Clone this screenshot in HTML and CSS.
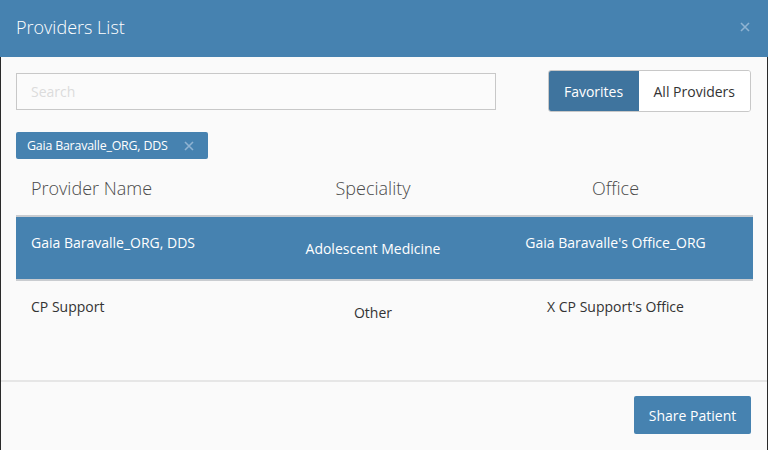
FILE: index.html
```html
<!DOCTYPE html>
<html>
<head>
<meta charset="utf-8">
<link rel="stylesheet" href="styles.css">
</head>
<body>
<div class="modal">
  <div class="modal-header">
    <h1 class="title">Providers List</h1>
    <svg class="close" width="10" height="10" viewBox="0 0 10 10"><path d="M1 1L9 9M9 1L1 9" stroke="#8fb3d2" stroke-width="1.6" fill="none"/></svg>
  </div>
  <div class="modal-body">
    <div class="toolbar">
      <input class="search" type="text" placeholder="Search">
      <div class="toggle">
        <button class="tbtn active">Favorites</button>
        <button class="tbtn">All Providers</button>
      </div>
    </div>
    <div class="tags">
      <span class="tag">Gaia Baravalle_ORG, DDS <svg class="tag-x" width="10" height="10" viewBox="0 0 10 10"><path d="M1 1L9 9M9 1L1 9" stroke="#8fb3d2" stroke-width="1.6" fill="none"/></svg></span>
    </div>
    <table class="grid">
      <colgroup>
        <col class="c1"><col class="c2"><col class="c3">
      </colgroup>
      <thead>
        <tr>
          <th class="left">Provider Name</th>
          <th>Speciality</th>
          <th>Office</th>
        </tr>
      </thead>
      <tbody>
        <tr class="selected">
          <td class="left top">Gaia Baravalle_ORG, DDS</td>
          <td>Adolescent Medicine</td>
          <td class="top">Gaia Baravalle's Office_ORG</td>
        </tr>
        <tr>
          <td class="left top">CP Support</td>
          <td>Other</td>
          <td class="top">X CP Support's Office</td>
        </tr>
      </tbody>
    </table>
  </div>
  <div class="modal-footer">
    <button class="share">Share Patient</button>
  </div>
</div>
</body>
</html>
```
FILE: styles.css
```css
html, body {
  margin: 0;
  padding: 0;
  width: 768px;
  height: 450px;
  overflow: hidden;
  background: #fafafa;
  font-family: "Open Sans", "Liberation Sans", sans-serif;
}
.modal {
  width: 768px;
  height: 450px;
  box-sizing: border-box;
  border-left: 1px solid #2a2a2a;
  border-right: 1px solid #2a2a2a;
  display: flex;
  flex-direction: column;
  background: #fafafa;
}
.modal-header {
  height: 57px;
  flex: none;
  background: #4682b0;
  margin: 0 -1px;
  display: flex;
  align-items: center;
  justify-content: space-between;
  padding: 0 18px 0 16px;
}
.title {
  margin: 0 0 3px 0;
  font-weight: 300;
  font-size: 18px;
  color: #fff;
}
.close {
  display: block;
  margin-bottom: 3px;
}
.modal-body {
  flex: 1;
  padding: 13px 15px 0 15px;
}
.toolbar {
  display: flex;
  align-items: center;
  justify-content: space-between;
}
.search {
  width: 480px;
  height: 37px;
  box-sizing: border-box;
  border: 1px solid #c8c8c8;
  background: #fbfbfb;
  padding: 0 14px;
  font-family: inherit;
  font-size: 14px;
  outline: none;
  margin-top: 1px;
}
.search::placeholder {
  color: #dcdcdc;
}
.toggle {
  display: flex;
  border: 1px solid #c8c8c8;
  border-radius: 3px;
  overflow: hidden;
  margin-right: 1px;
}
.tbtn {
  height: 40px;
  border: none;
  margin: 0;
  font-family: inherit;
  font-size: 14px;
  background: #fff;
  color: #333;
  padding: 0 15px;
}
.tbtn.active {
  background: #3f749e;
  color: #fff;
  width: 90px;
}
.tags {
  margin-top: 20px;
  display: flex;
}
.tag {
  background: #4682b0;
  color: #fff;
  font-size: 12.4px;
  height: 27px;
  box-sizing: border-box;
  padding: 0 14px 0 11px;
  display: flex;
  align-items: center;
  border-radius: 2px;
  letter-spacing: -0.2px;
}
.tag-x {
  display: block;
  margin-left: 16px;
}
.grid {
  width: 737px;
  border-collapse: collapse;
  margin-top: 14px;
  table-layout: fixed;
}
.c1 { width: 252px; }
.c2 { width: 210px; }
.c3 { width: 275px; }
.grid th {
  font-weight: 300;
  font-size: 18px;
  color: #4a4a4a;
  height: 43px;
  padding: 3px 15px 0 15px;
  border-bottom: 2px solid #c9ccd0;
  vertical-align: top;
  text-align: center;
  box-sizing: border-box;
}
.grid th.left, .grid td.left {
  text-align: left;
}
.grid td {
  height: 64px;
  box-sizing: border-box;
  padding: 0 15px;
  font-size: 14px;
  color: #333;
  text-align: center;
  vertical-align: middle;
  border-bottom: 2px solid #fafafa;
}
.grid td.top {
  padding-bottom: 12px;
}
.grid tr.selected td {
  background: #4682b0;
  color: #fff;
  border-bottom: 2px solid #c9ccd0;
}
.modal-footer {
  border-top: 2px solid #e6e6e6;
  height: 70px;
  box-sizing: border-box;
  display: flex;
  align-items: center;
  justify-content: flex-end;
  padding: 0 16px;
  flex: none;
}
.share {
  background: #4682b0;
  color: #fff;
  border: none;
  border-radius: 2px;
  height: 38px;
  width: 117px;
  font-family: inherit;
  font-size: 14px;
  margin-top: -2px;
}
```
